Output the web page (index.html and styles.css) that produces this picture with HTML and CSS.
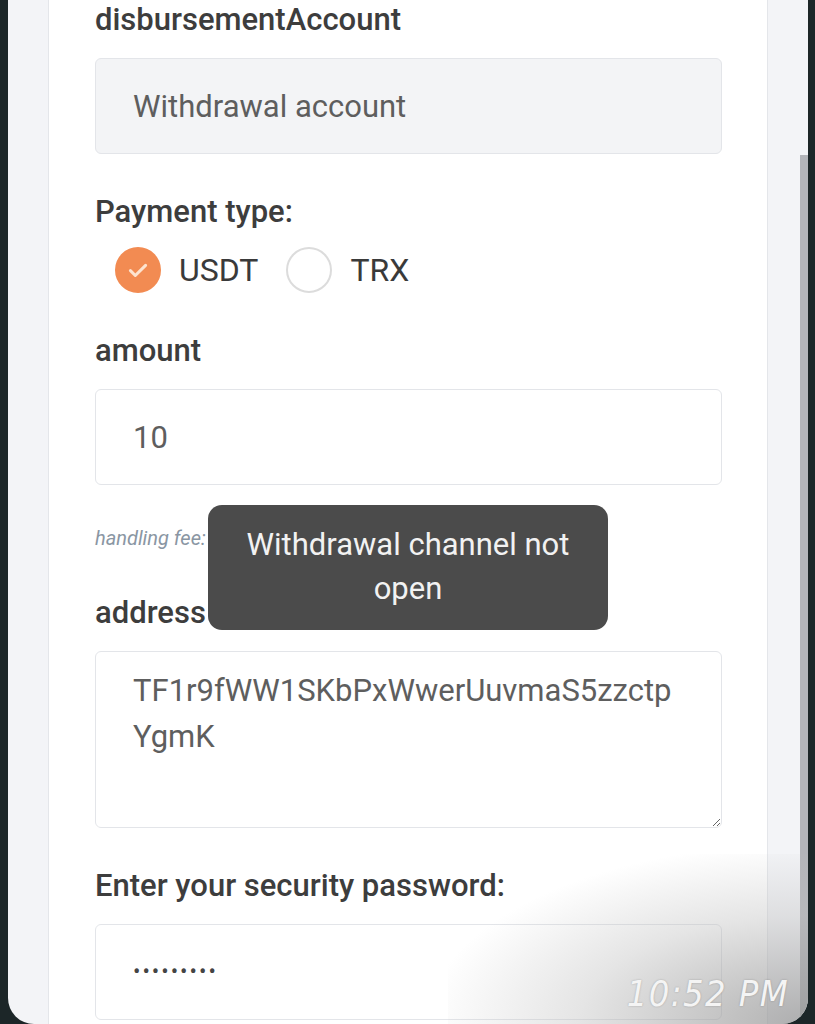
FILE: index.html
```html
<!DOCTYPE html>
<html lang="en">
<head>
  <meta charset="UTF-8">
  <meta name="viewport" content="width=device-width, initial-scale=1.0">
  <link rel="stylesheet" href="styles.css">
  <title>Withdraw</title>
</head>
<body>
  <div class="screen">
    <div class="card">
      <div class="field">
        <label class="label" for="account">disbursementAccount</label>
        <input class="input readonly" id="account" type="text" value="Withdrawal account" readonly>
      </div>
      <div class="field">
        <div class="label">Payment type:</div>
        <div class="radios">
          <span class="radio checked">
            <svg viewBox="0 0 24 24" width="28" height="28"><path d="M5.5 12.5l4.2 4.2L18.5 8" fill="none" stroke="#fde3cf" stroke-width="2.6" stroke-linecap="round" stroke-linejoin="round"/></svg>
          </span>
          <span class="radio-text">USDT</span>
          <span class="radio"></span>
          <span class="radio-text">TRX</span>
        </div>
      </div>
      <div class="field">
        <label class="label" for="amount">amount</label>
        <input class="input" id="amount" type="text" value="10">
      </div>
      <div class="fee">handling fee:<span class="fee-num">0</span> USDT</div>
      <div class="field">
        <label class="label" for="address">address</label>
        <textarea class="input area" id="address">TF1r9fWW1SKbPxWwerUuvmaS5zzctpYgmK</textarea>
      </div>
      <div class="field">
        <label class="label" for="pwd">Enter your security password:</label>
        <div class="input dots">•••••••••</div>
      </div>
    </div>
    <div class="scrollbar"><div class="thumb"></div></div>

    <div class="toast">Withdrawal channel not open</div>
    <div class="shade"></div>
    <div class="time">10:52 PM</div>
  </div>
</body>
</html>
```

FILE: styles.css
```css
body {
  margin: 0;
  padding: 0 7px 0 8px;
  background-color: #1c2628;
  font-family: Roboto, 'Noto Sans', sans-serif;
  overflow: hidden;
}
.screen {
  position: relative;
  display: flex;
  height: 1024px;
  background-color: #f3f4f7;
  border-radius: 0 0 26px 26px;
  overflow: hidden;
}
.card {
  width: 626px;
  margin-left: 40px;
  padding: 2px 46px 0 46px;
  background-color: #fff;
  border-left: 1px solid #e4e6ea;
  border-right: 1px solid #e4e6ea;
}
.field {
  margin-bottom: 40px;
}
.label {
  display: block;
  height: 36px;
  line-height: 36px;
  margin-bottom: 20px;
  font-size: 31px;
  font-weight: 500;
  color: #3d3d3d;
  white-space: nowrap;
}
.input {
  display: block;
  box-sizing: border-box;
  width: 627px;
  height: 96px;
  padding: 0 37px;
  border: 1px solid #e3e5e9;
  border-radius: 6px;
  background-color: #fff;
  font-family: Roboto, 'Noto Sans', sans-serif;
  font-size: 31px;
  color: #5e5e5e;
  outline: none;
}
.readonly {
  background-color: #f3f4f6;
}
.area {
  height: 177px;
  padding: 16px 37px;
  line-height: 46px;
  resize: vertical;
}
.dots {
  line-height: 94px;
  font-size: 22px;
  letter-spacing: 2px;
  color: #444;
}
.radios {
  display: flex;
  align-items: center;
  height: 46px;
  margin-top: -3px;
  padding-left: 20px;
}
.radio {
  display: flex;
  align-items: center;
  justify-content: center;
  box-sizing: border-box;
  width: 46px;
  height: 46px;
  border: 2px solid #dcdcdc;
  border-radius: 50%;
}
.radio.checked {
  border-color: #f28b52;
  background-color: #f28b52;
}
.radio-text {
  margin: 0 28px 0 18px;
  font-size: 32px;
  color: #3a3a3a;
}
.fee {
  height: 30px;
  line-height: 30px;
  margin: -2px 0 42px;
  font-size: 20px;
  font-style: italic;
  color: #8a96a3;
}
.fee-num {
  margin: 0 4px;
  color: #e08a50;
}
.scrollbar {
  margin-left: auto;
  width: 8px;
  padding-top: 155px;
}
.thumb {
  height: 100%;
  background-color: #b3b5ba;
}
.toast {
  position: absolute;
  left: 200px;
  top: 505px;
  box-sizing: border-box;
  width: 400px;
  height: 125px;
  padding: 18px 20px;
  border-radius: 14px;
  background-color: #4b4b4b;
  color: #f2f2f2;
  font-size: 31px;
  line-height: 44px;
  text-align: center;
}
.shade {
  position: absolute;
  right: 0;
  bottom: 0;
  width: 360px;
  height: 170px;
  background: radial-gradient(ellipse at 100% 100%, rgba(150, 150, 150, 0.75) 0%, rgba(190, 190, 190, 0.4) 45%, rgba(255, 255, 255, 0) 75%);
}
.time {
  position: absolute;
  right: 19px;
  bottom: 10px;
  font-family: 'DejaVu Sans Condensed', 'DejaVu Sans', sans-serif;
  font-size: 36px;
  font-style: italic;
  letter-spacing: 1.4px;
  color: #f4f4f4;
  text-shadow: 0 0 2px rgba(0, 0, 0, 0.25);
}
```
